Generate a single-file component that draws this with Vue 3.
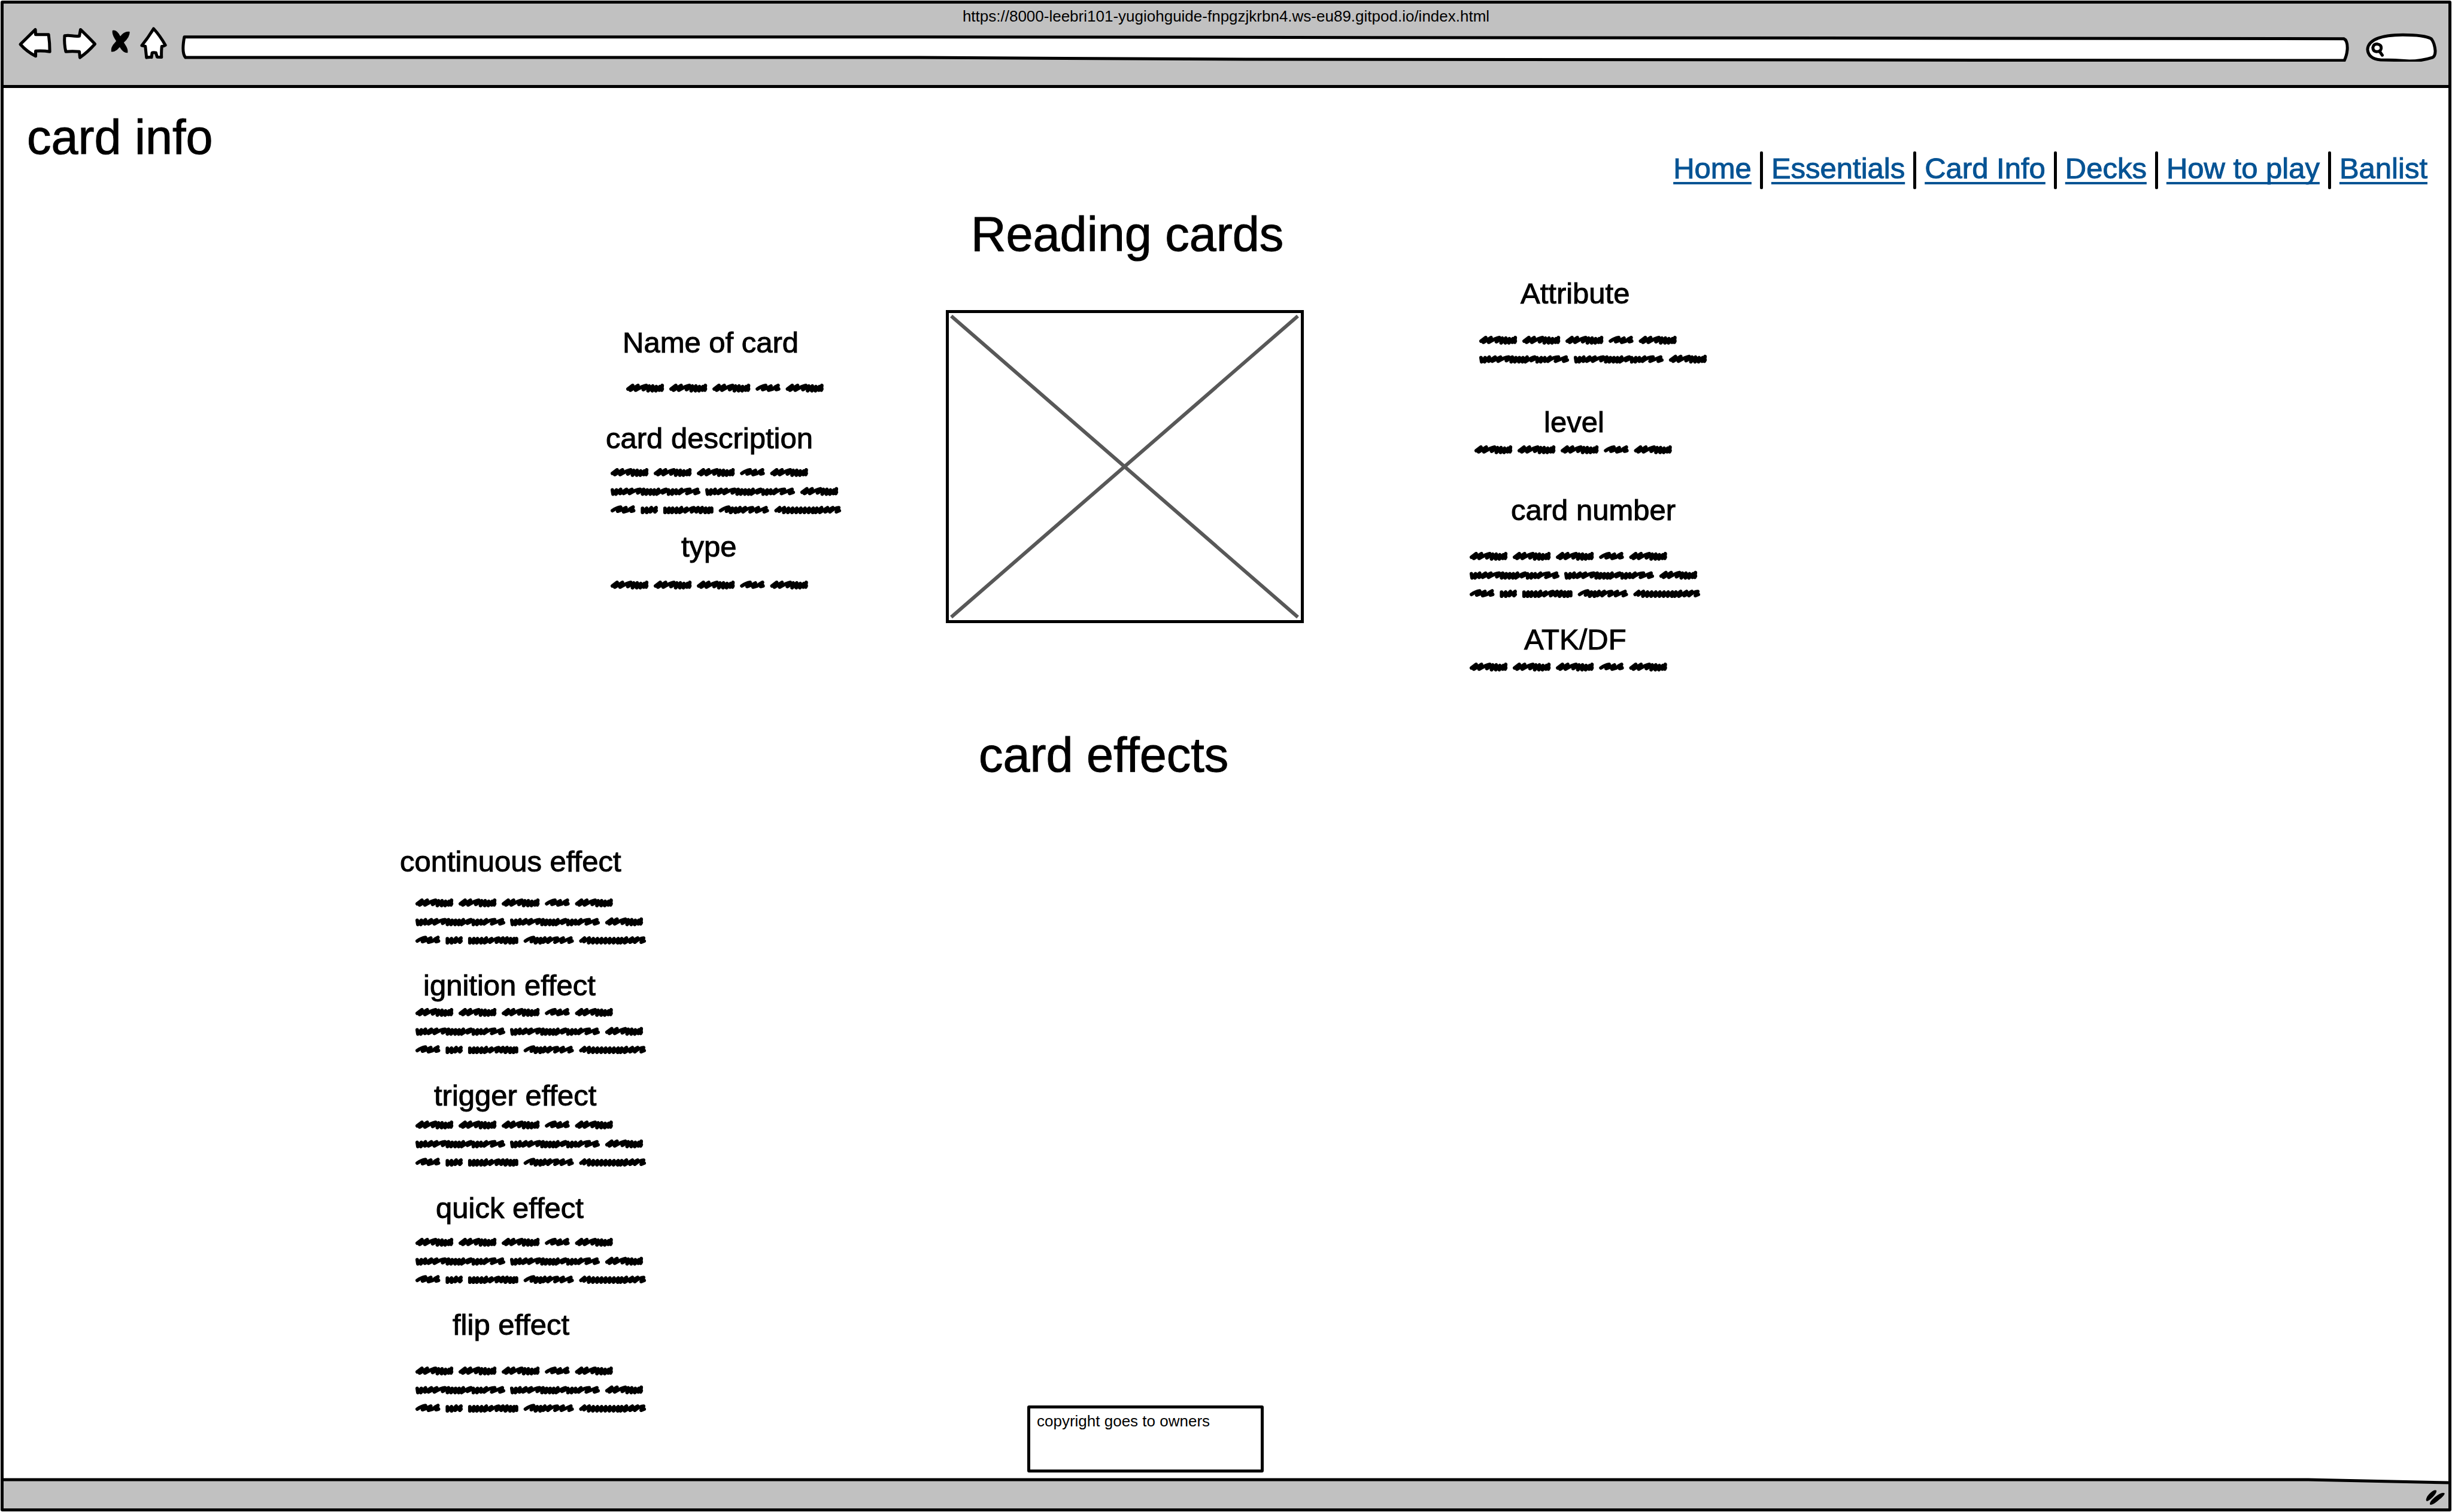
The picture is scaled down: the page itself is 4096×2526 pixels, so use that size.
<script setup>
const url = 'https://8000-leebri101-yugiohguide-fnpgzjkrbn4.ws-eu89.gitpod.io/index.html'

const links = ['Home', 'Essentials', 'Card Info', 'Decks', 'How to play', 'Banlist']

// Scribbled placeholder words, each drawn from its own left edge
const words = {
  medium: 'M3 9L11 3L7 11L20 3L16 11Q28 4 34 3L29 10L39 4L37 12L45 4L44 12L51 5L50 12L57 5L56 11L61 3L60 11L61 9',
  short: 'M3 9Q10 4 17 3L12 10Q19 8 26 4L22 11L29 9Q33 5 38 3L35 10L39 9',
  long: 'M3 5L4 12L10 5L9 12L17 4L16 11L27 4L22 11L36 4L32 11Q42 5 50 4L46 10L56 4L54 12L62 5L60 12L68 5L67 12L74 5L73 12L81 4L78 12Q88 5 94 4L88 10L98 5L98 12L105 5L104 12L111 5L111 11L120 4L116 11Q126 4 134 4L129 11L147 4L143 11L149 9',
  tiny: 'M3 5L3 12L10 5L10 12L18 4L16 11L26 4L24 11L26 9',
  dense: 'M3 5L3 12L10 5L9 12L16 5L15 12L23 5L22 12L31 4L28 12L40 5L37 11Q46 5 52 4L48 11L59 4L56 11L66 4L63 12L72 5L71 12L78 5L77 12L82 5L82 11',
  loose: 'M3 9Q10 4 17 3L13 10L23 5L20 12L29 5L28 12L36 4L33 11L45 4L41 11Q50 4 57 4L53 11L67 4L64 11L80 4L77 11L82 9',
  wide: 'M3 9L9 4L8 10L17 4L16 12L24 5L23 12L31 5L30 12L38 5L37 12L45 5L44 12L52 5L51 12L59 5L58 12L66 5L65 12L72 5L70 12L80 4L77 12L90 4L86 11L99 4L94 11Q103 4 109 4L105 11L110 9'
}

const scribble = [
  { y: 0, row: [['medium', 0], ['medium', 73], ['medium', 146], ['short', 219], ['medium', 270]] },
  { y: 32, row: [['long', 0], ['long', 160], ['medium', 321]] },
  { y: 63, row: [['short', 0], ['tiny', 51], ['dense', 89], ['loose', 183], ['wide', 277]] }
]

const strokes = (lines) =>
  scribble.slice(0, lines).flatMap(({ y, row }) =>
    row.map(([name, x]) => ({ d: words[name], at: `translate(${x} ${y})` }))
  )

const leftNotes = [
  { label: 'Name of card', lines: 1, before: 0, gap: 41, labelIndent: 28, textIndent: 34 },
  { label: 'card description', lines: 3, before: 47, gap: 22, labelIndent: 0, textIndent: 8 },
  { label: 'type', lines: 1, before: 25, gap: 29, labelIndent: 126, textIndent: 8 }
]

const rightNotes = [
  { label: 'Attribute', lines: 2, before: 0, gap: 43, labelIndent: 85, textIndent: 16 },
  { label: 'level', lines: 1, before: 69, gap: 11, labelIndent: 124, textIndent: 8 },
  { label: 'card number', lines: 3, before: 64, gap: 42, labelIndent: 69, textIndent: 0 },
  { label: 'ATK/DF', lines: 1, before: 40, gap: 11, labelIndent: 91, textIndent: 0 }
]

const effects = [
  { label: 'continuous effect', lines: 3, before: 0, gap: 34, labelIndent: 0, textIndent: 26 },
  { label: 'ignition effect', lines: 3, before: 39, gap: 10, labelIndent: 39, textIndent: 26 },
  { label: 'trigger effect', lines: 3, before: 40, gap: 14, labelIndent: 57, textIndent: 26 },
  { label: 'quick effect', lines: 3, before: 40, gap: 22, labelIndent: 60, textIndent: 26 },
  { label: 'flip effect', lines: 3, before: 39, gap: 42, labelIndent: 88, textIndent: 26 }
]

const groups = { left: leftNotes, right: rightNotes, effects }
const scribbleHeight = (lines) => scribble[lines - 1].y + 16
</script>

<template>
  <div class="window">
    <header class="chrome">
      <div class="page-url">{{ url }}</div>
      <div class="toolbar">
        <button class="tool back" type="button" aria-label="Back">
          <svg viewBox="28 45 68 60">
            <path class="outline" d="M34 75.5L59.5 50.5L60 59Q71 59 82 59Q84 73 84 88Q72 86 60 87L60 95.5Q45 88 34 75.5Z" />
          </svg>
        </button>
        <button class="tool forward" type="button" aria-label="Forward">
          <svg viewBox="96 45 80 60">
            <path class="outline" d="M109 61Q114 60 121 61Q128 62 134 61.5L136 50.5Q150 64 160.5 75Q148 89 135 98L134 88Q122 87 111 88Q108 75 109 61Z" />
          </svg>
        </button>
        <button class="tool stop" type="button" aria-label="Stop">
          <svg viewBox="176 45 56 60">
            <path d="M190 52Q197 50 203 61Q207 69 213 78Q217 84 216 90Q209 91 203 81Q198 72 194 66Q189 58 190 52Z" />
            <path d="M219.500 54Q220 63 209 73Q203 80 198 85Q193 89 188 88Q187 80 194 73Q200 66 206 59Q212 53 219.500 54Z" />
          </svg>
        </button>
        <button class="tool home" type="button" aria-label="Home page">
          <svg viewBox="232 45 60 60">
            <path class="outline" d="M260 49Q271 61 280 77Q277 79 274 79Q273 88 273.500 97.500L266 97L264 90Q260 89 257.500 90L256.500 97.500Q252 97 248 98L246 79Q243 78 240 77.500Q251 64 260 49Z" />
          </svg>
        </button>
        <label class="address">
          <svg viewBox="0 0 3667 60" preserveAspectRatio="none" aria-hidden="true">
            <path class="outline" d="M7 18H1250L3656 21Q3663 24 3662 40Q3661 50 3657 58L1800 56L1250 53H9Q2 45 7 18Z" />
          </svg>
          <input type="text" aria-label="Address" />
        </label>
        <label class="search">
          <svg viewBox="0 0 124 60" aria-hidden="true">
            <path class="outline" d="M26 57Q5 55 4 39Q6 15 64 14.500Q100 14.500 112 21Q118 28 119 42Q119 51 114 53Q95 59 75 59Q50 57 26 57Z" />
            <path class="outline" d="M20 30Q28 31 27 38Q26 43 19 43Q13 42 13 36Q14 30 20 30ZM24 42L29 49" />
          </svg>
          <input type="search" aria-label="Search" />
        </label>
      </div>
    </header>

    <main class="page">
      <div class="masthead">
        <h1 class="title">card info</h1>
        <nav class="nav">
          <template v-for="(link, i) in links" :key="link">
            <span v-if="i" class="divider"></span>
            <a href="#">{{ link }}</a>
          </template>
        </nav>
      </div>

      <section class="reading">
        <div v-for="side in ['left', 'right']" :key="side" class="notes" :class="side">
          <article v-for="n in groups[side]" :key="n.label" :style="{ marginTop: n.before + 'px' }">
            <h3 class="label" :style="{ marginLeft: n.labelIndent + 'px' }">{{ n.label }}</h3>
            <svg
              class="scribble"
              :viewBox="`0 0 396 ${scribbleHeight(n.lines)}`"
              :style="{ marginTop: n.gap + 'px', marginLeft: n.textIndent + 'px' }"
            >
              <path v-for="(s, i) in strokes(n.lines)" :key="i" :d="s.d" :transform="s.at" />
            </svg>
          </article>
        </div>
        <div class="card">
          <h2 class="title">Reading cards</h2>
          <svg class="picture" viewBox="0 0 598 523" role="img" aria-label="Card picture">
            <path class="cross" d="M9 10L588 513M588 10L9 513" />
            <rect x="2.500" y="2.500" width="593" height="518" />
          </svg>
        </div>
      </section>

      <section class="effects">
        <h2 class="title">card effects</h2>
        <div class="notes list">
          <article v-for="n in groups.effects" :key="n.label" :style="{ marginTop: n.before + 'px' }">
            <h3 class="label" :style="{ marginLeft: n.labelIndent + 'px' }">{{ n.label }}</h3>
            <svg
              class="scribble"
              :viewBox="`0 0 396 ${scribbleHeight(n.lines)}`"
              :style="{ marginTop: n.gap + 'px', marginLeft: n.textIndent + 'px' }"
            >
              <path v-for="(s, i) in strokes(n.lines)" :key="i" :d="s.d" :transform="s.at" />
            </svg>
          </article>
        </div>
        <p class="copyright">copyright goes to owners</p>
      </section>
    </main>

    <footer class="status">
      <svg class="edge" viewBox="0 0 4084 51" preserveAspectRatio="none" aria-hidden="true">
        <path class="fill" d="M0 3H3850L4084 8V51H0Z" />
        <path class="line" d="M0 3H3850L4084 8" />
      </svg>
      <svg class="grip" viewBox="0 0 34 30" aria-hidden="true">
        <path d="M1 17Q2 12 9 6Q15 1 18 3Q19 7 12 14Q6 20 2 21Q0 20 1 17Z" />
        <path d="M8 22Q12 16 21 10Q29 5 32 8Q30 13 23 18Q13 27 8 27Q6 26 8 22Z" />
      </svg>
    </footer>
  </div>
</template>

<style>
body {
  margin: 0;
  background: #fff;
}
</style>

<style scoped>
* {
  box-sizing: border-box;
}

.window {
  display: flex;
  flex-direction: column;
  min-height: calc(100vh - 2px);
  margin: 1px;
  border: 5px solid #000;
  border-radius: 3px;
  background: #fff;
  color: #000;
  font-family: "Liberation Sans", Arial, sans-serif;
}

h1,
h2,
h3,
p {
  margin: 0;
  font-weight: 400;
}

svg {
  display: block;
}

.outline {
  fill: #fff;
  stroke: #000;
  stroke-width: 5px;
  stroke-linejoin: round;
  stroke-linecap: round;
  vector-effect: non-scaling-stroke;
}

/* Browser chrome */
.chrome {
  border-bottom: 5px solid #000;
  background: #c1c1c1;
}

.page-url {
  height: 38px;
  padding-top: 5px;
  font-size: 26px;
  line-height: 32px;
  text-align: center;
}

.toolbar {
  display: flex;
  align-items: flex-start;
  height: 98px;
  padding: 0 17px 0 22px;
}

.tool {
  flex: none;
  height: 59px;
  padding: 0;
  border: 0;
  background: none;
}

.tool svg {
  width: 100%;
  height: 100%;
}

.back {
  width: 67px;
}

.forward {
  width: 79px;
}

.stop {
  width: 55px;
}

.home {
  width: 59px;
}

.address,
.search {
  position: relative;
  height: 59px;
}

.address {
  flex: 1;
  margin: 0 25px 0 13px;
}

.search {
  flex: none;
  width: 122px;
}

.address svg,
.search svg {
  position: absolute;
  inset: 0;
  width: 100%;
  height: 100%;
}

.address input,
.search input {
  position: relative;
  width: 100%;
  height: 100%;
  padding: 16px 12px 0;
  border: 0;
  outline: 0;
  background: transparent;
  font: inherit;
  font-size: 26px;
  appearance: none;
}

.search input {
  padding-left: 36px;
}

/* Page */
.page {
  display: flex;
  flex: 1;
  flex-direction: column;
}

.masthead {
  display: flex;
  justify-content: space-between;
  padding: 36px 35px 0 39px;
}

.title,
.label,
.nav a {
  -webkit-text-stroke: 1px currentColor;
}

.title {
  font-size: 81px;
  line-height: 92px;
  white-space: nowrap;
}

.nav {
  display: flex;
  gap: 14px;
  margin-top: 70px;
  font-size: 49px;
  line-height: 56px;
}

.nav a {
  color: #065394;
  text-decoration: underline;
  text-decoration-thickness: 4px;
  text-decoration-skip-ink: none;
  text-underline-offset: 6px;
}

.divider {
  width: 5px;
  height: 63px;
  border-radius: 2px;
  background: #000;
}

.label {
  font-size: 49px;
  line-height: 56px;
  white-space: nowrap;
}

.scribble {
  width: 391px;
  fill: none;
  stroke: #000;
  stroke-width: 6px;
  stroke-linejoin: round;
  stroke-linecap: round;
}

.reading {
  display: grid;
  grid-template-columns: 1006fr 398px 170fr 598px 277fr 400px 1235fr;
  margin-top: 29px;
}

.left,
.right,
.card {
  grid-row: 1;
}

.left {
  grid-column: 2;
  padding-top: 199px;
}

.card {
  grid-column: 4;
}

.right {
  grid-column: 6;
  padding-top: 117px;
}

.card .title {
  padding-left: 42px;
}

.picture {
  width: 100%;
  margin-top: 81px;
}

.picture rect {
  fill: none;
  stroke: #000;
  stroke-width: 5px;
}

.cross {
  stroke: #585858;
  stroke-width: 6px;
}

.effects {
  display: grid;
  flex: 1;
  grid-template-columns: 662fr 420px 547fr 476px 1979fr;
  grid-template-rows: auto 1fr;
  row-gap: 104px;
  margin-top: 92px;
  padding-bottom: 9px;
}

.effects .title {
  grid-column: 4;
}

.list {
  grid-row: 2;
  grid-column: 2;
}

.copyright {
  grid-row: 2;
  grid-column: 4;
  align-self: end;
  justify-self: end;
  width: 395px;
  height: 112px;
  padding: 6px 11px;
  border: 5px solid #000;
  border-radius: 3px;
  font-size: 26px;
  line-height: 30px;
}

/* Status bar */
.status {
  position: relative;
  display: flex;
  justify-content: flex-end;
  height: 51px;
  padding: 18px 4px 0 0;
}

.edge {
  position: absolute;
  inset: 0;
  width: 100%;
  height: 100%;
}

.edge .fill {
  fill: #c1c1c1;
}

.edge .line {
  fill: none;
  stroke: #000;
  stroke-width: 5px;
}

.grip {
  position: relative;
  width: 34px;
  height: 30px;
}
</style>
